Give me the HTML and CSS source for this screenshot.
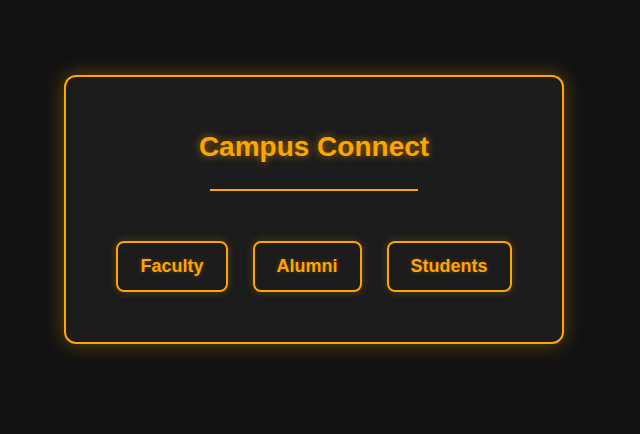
FILE: index.html
```html
<!DOCTYPE html>
<html>
<head>
<meta charset="utf-8">
<link rel="stylesheet" href="styles.css">
</head>
<body>
<div class="card">
  <h1 class="title">Campus Connect</h1>
  <div class="rule"></div>
  <div class="buttons">
    <button class="btn">Faculty</button>
    <button class="btn">Alumni</button>
    <button class="btn">Students</button>
  </div>
</div>
</body>
</html>
```
FILE: styles.css
```css
html, body {
  margin: 0;
  height: 100%;
}
body {
  background: #121212;
  font-family: "Liberation Sans", Arial, sans-serif;
  padding: 75px 0 0 64px;
  box-sizing: border-box;
}
.card {
  width: 500px;
  box-sizing: border-box;
  border: 2px solid #ffa500;
  border-radius: 12px;
  background: #1c1c1c;
  box-shadow: 0 0 20px rgba(255, 165, 0, 0.35);
  padding: 54px 40px 50px;
  display: flex;
  flex-direction: column;
  align-items: center;
}
.title {
  margin: 0;
  font-size: 28px;
  font-weight: bold;
  line-height: 32px;
  color: #ffa500;
  text-shadow: 0 0 8px rgba(255, 165, 0, 0.6);
}
.rule {
  width: 208px;
  height: 2px;
  background: #ffa500;
  margin-top: 26px;
}
.buttons {
  display: flex;
  gap: 25px;
  margin-top: 50px;
}
.btn {
  font-family: "Liberation Sans", Arial, sans-serif;
  font-size: 18px;
  font-weight: bold;
  line-height: 21px;
  padding: 13px 22px;
  color: #ffa500;
  background: transparent;
  border: 2px solid #ffa500;
  border-radius: 8px;
  box-shadow: 0 0 8px rgba(255, 165, 0, 0.25);
  text-shadow: 0 0 4px rgba(255, 165, 0, 0.3);
}
```
